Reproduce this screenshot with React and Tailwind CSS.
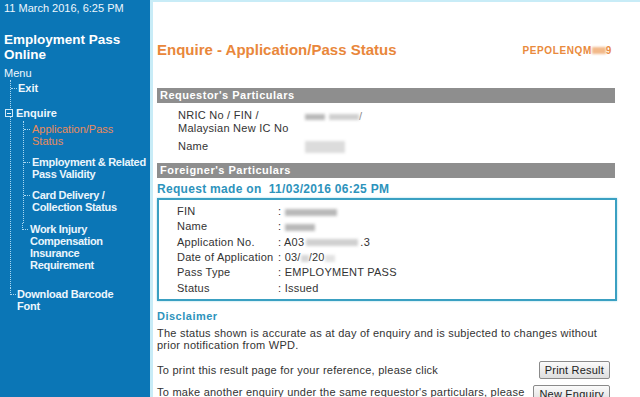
import React from 'react';

const font = { fontFamily: '"Liberation Sans", Arial, sans-serif' };

function Blur({ w, h = 8, className = '' }) {
  return <span className={`inline-block align-middle bg-[#b9b9b9] blur-[1.5px] ${className}`} style={{ width: w, height: h }} />;
}

function SubItem({ children, active, last }) {
  return (
    <div className="flex items-start">
      {!last && <span className="mt-[6px] w-[6px] shrink-0 border-t border-dotted border-[#a9d8f2]" />}
      {last && <span className="h-[7px] w-[6px] shrink-0 border-l border-b border-dotted border-[#a9d8f2]" />}
      <div className={`ml-[2px] whitespace-nowrap leading-[12px] ${active ? 'text-[#e98b5c]' : 'font-bold tracking-[-0.3px] text-[#eaf5fc]'}`}>{children}</div>
    </div>
  );
}

function Sidebar() {
  return (
    <div className="w-[150px] shrink-0 bg-[#0b76b6] text-[11px] text-[#eef7fd]">
      <div className="pl-[4px] pt-[1px] leading-[14px]">11 March 2016, 6:25 PM</div>
      <div className="pl-[4px] mt-[17px] text-[13.5px] font-bold leading-[15px] text-white">Employment Pass<br />Online</div>
      <div className="pl-[4px] mt-[4px] leading-[14px]">Menu</div>
      <div className="ml-[10px] border-l border-dotted border-[#a9d8f2]">
        <div className="flex items-start pt-[1px]">
          <span className="mt-[7px] w-[6px] border-t border-dotted border-[#a9d8f2]" />
          <span className="ml-px leading-[14px] font-bold">Exit</span>
        </div>
        <div className="flex items-center mt-[11px] -ml-[6px]">
          <span className="flex h-[8px] w-[8px] items-center justify-center border border-[#cfe9f8] bg-[#0b76b6]">
            <span className="block h-px w-[4px] bg-[#eef7fd]" />
          </span>
          <span className="ml-[3px] leading-[14px] font-bold">Enquire</span>
        </div>
        <div className="ml-[12px] mt-[1px]">
          <div className="border-l border-dotted border-[#a9d8f2] flex flex-col gap-[9px] pt-[2px] pb-[10px]">
            <SubItem active>Application/Pass<br />Status</SubItem>
            <SubItem>Employment &amp; Related<br />Pass Validity</SubItem>
            <SubItem>Card Delivery /<br />Collection Status</SubItem>
          </div>
          <div className="-ml-px">
            <SubItem last>Work Injury<br />Compensation<br />Insurance<br />Requirement</SubItem>
          </div>
        </div>
        <div className="h-[17px]" />
      </div>
      <div className="ml-[10px] flex items-start">
        <span className="h-[7px] w-[6px] shrink-0 border-l border-b border-dotted border-[#a9d8f2]" />
        <div className="ml-px whitespace-nowrap leading-[12px] font-bold tracking-[-0.2px]">Download Barcode<br />Font</div>
      </div>
    </div>
  );
}

function Bar({ children }) {
  return <div className="bg-[#8e8e8e] px-[3px] text-[11px] font-bold leading-[15px] tracking-[0.5px] text-white">{children}</div>;
}

const foreigner = [
  ['FIN', <Blur w={52} h={7} />],
  ['Name', <Blur w={30} h={7} />],
  ['Application No.', <span>A03<Blur w={52} h={7} className="mx-[2px] bg-[#d0d0d0]" />.3</span>],
  ['Date of Application', <span>03/<Blur w={8} h={7} className="bg-[#d6d6d6]" />/20<Blur w={10} h={7} className="bg-[#e2e2e2]" /></span>],
  ['Pass Type', 'EMPLOYMENT PASS'],
  ['Status', 'Issued'],
];

function Button({ children }) {
  return (
    <button className="h-[18px] rounded-[2px] border border-[#8a8a8a] bg-gradient-to-b from-[#fbfbfb] to-[#dedede] px-[5px] text-[11px] leading-[14px] tracking-[0.2px] text-[#222]">
      {children}
    </button>
  );
}

export default function App() {
  return (
    <div className="flex h-[397px] w-[640px] overflow-hidden bg-white" style={font}>
      <Sidebar />
      <div className="flex-1 border-l-[3px] border-t-2 border-[#c8ecf7] pl-[4px] pr-[25px] text-[11px] tracking-[0.25px] text-[#333]">
        <div className="mt-[39px] flex items-center justify-between">
          <div className="text-[15px] font-bold leading-[18px] tracking-normal text-[#e9873b]">Enquire - Application/Pass Status</div>
          <div className="mr-[3px] text-[10px] font-bold tracking-[0.6px] text-[#e98a3c]">
            PEPOLENQM<span className="inline-block h-[7px] w-[14px] bg-[#f2b98a] blur-[1px] align-middle" />9
          </div>
        </div>
        <div className="mt-[29px]">
          <Bar>Requestor's Particulars</Bar>
        </div>
        <div className="mt-[6px] pl-[21px] leading-[13px]">
          <div className="flex">
            <div className="w-[127px]">NRIC No / FIN /<br />Malaysian New IC No</div>
            <div className="pt-[1px]"><Blur w={20} h={6} /><Blur w={30} h={6} className="ml-[4px] bg-[#cfcfcf]" /><span className="text-[#888]">/</span></div>
          </div>
          <div className="mt-[5px] flex">
            <div className="w-[127px]">Name</div>
            <div><Blur w={40} h={12} className="bg-[#dcdcdc]" /></div>
          </div>
        </div>
        <div className="mt-[10px]">
          <Bar>Foreigner's Particulars</Bar>
        </div>
        <div className="mt-[4px] text-[12px] font-bold leading-[14px] tracking-[0.3px] text-[#2d93bc]">Request made on&nbsp; 11/03/2016 06:25 PM</div>
        <div className="-mr-[2px] mt-[2px] border-2 border-[#3aa0c2] pl-[18px] pt-[4px] pb-[3px] shadow-[0_0_2px_#9fd8ea]">
          {foreigner.map(([k, v]) => (
            <div key={k} className="flex leading-[15.3px]">
              <div className="w-[101px]">{k}</div>
              <div>: {v}</div>
            </div>
          ))}
        </div>
        <div className="mt-[8px] font-bold leading-[14px] tracking-[0.5px] text-[#2d93bc]">Disclaimer</div>
        <div className="mt-[4px] leading-[12px]">
          The status shown is accurate as at day of enquiry and is subjected to changes without prior notification from WPD.
        </div>
        <div className="mt-[10px] flex items-center justify-between pr-[5px]">
          <span>To print this result page for your reference, please click</span>
          <Button>Print Result</Button>
        </div>
        <div className="mt-[6px] flex items-start justify-between pr-[5px]">
          <span className="pt-[1px] leading-[12px]">To make another enquiry under the same requestor's particulars, please</span>
          <Button>New Enquiry</Button>
        </div>
      </div>
    </div>
  );
}
